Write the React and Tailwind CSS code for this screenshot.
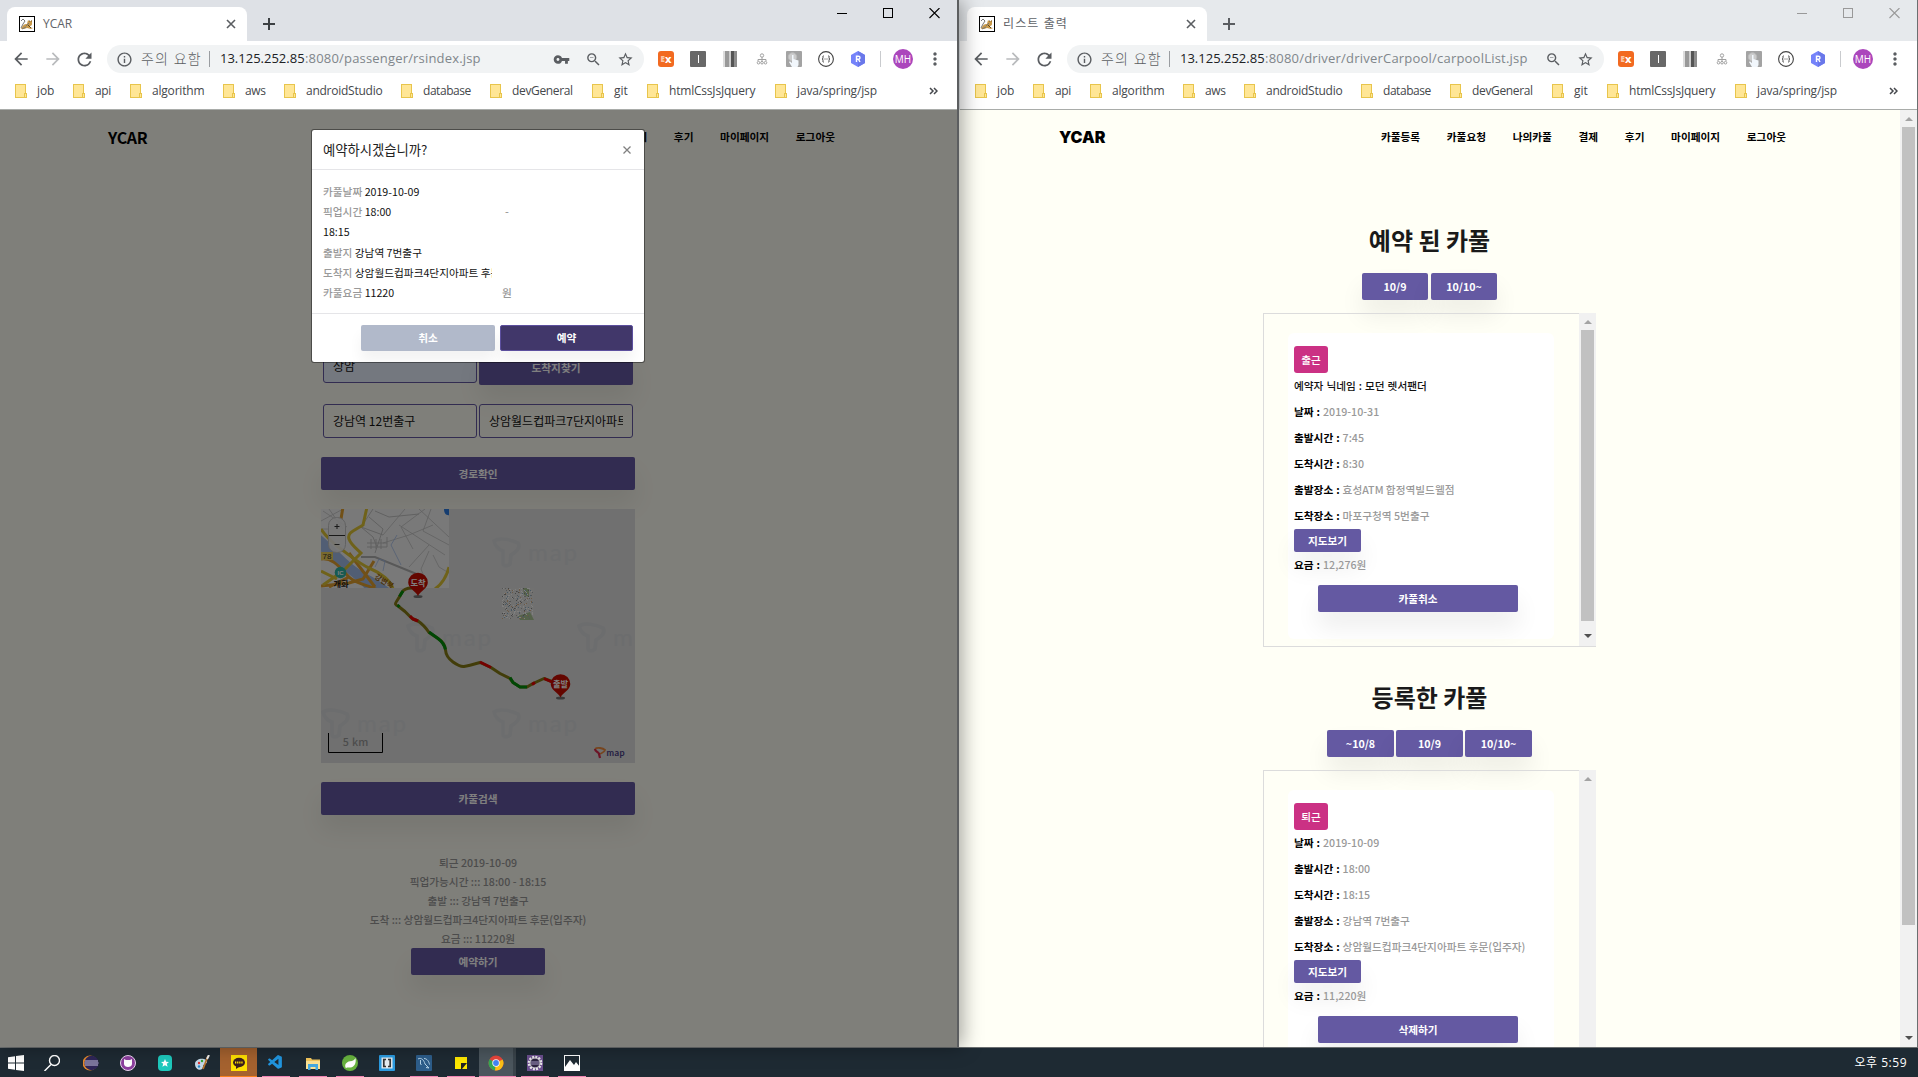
import React from "react";
import { MdArrowBack, MdArrowForward, MdRefresh, MdInfoOutline, MdVpnKey, MdStarBorder, MdZoomOut, MdMoreVert } from "react-icons/md";
import { VscVscode } from "react-icons/vsc";

const UI = "font-['Open_Sans','Noto_Sans_CJK_KR',sans-serif]";
const PAGE = "font-['Noto_Sans_CJK_KR',sans-serif]";

/* ---------- browser chrome ---------- */

const BOOKMARKS = [
  ["job", "w-[58px]", "tracking-[-0.1px]"],
  ["api", "w-[57px]", "tracking-[-0.4px]"],
  ["algorithm", "w-[93px]", "tracking-[-0.2px]"],
  ["aws", "w-[61px]", "tracking-[-0.3px]"],
  ["androidStudio", "w-[117px]", "tracking-[-0.25px]"],
  ["database", "w-[89px]", "tracking-[-0.45px]"],
  ["devGeneral", "w-[102px]", "tracking-[-0.35px]"],
  ["git", "w-[55px]", "tracking-[0px]"],
  ["htmlCssJsJquery", "w-[128px]", "tracking-[-0.2px]"],
  ["java/spring/jsp", "w-[120px]", "tracking-[-0.15px]"],
];

function Favicon() {
  return (
    <svg width="16" height="16" viewBox="0 0 16 16" className="shrink-0">
      <rect x=".5" y=".5" width="15" height="15" fill="#fff" stroke="#000" />
      <path d="M2 13c2-4 3-5 6-5l1-4 1 1h2l1-1v4c0 2-3 2-3 3l4 1-2 1-4-1-3 1z" fill="#c99a4a" />
      <path d="M2 5l2-2 2 2-2 3-2 4M7 10l3-3M3 13l4-2" stroke="#777" fill="none" />
      <path d="M10 5h.8M12 5h.8M9 9l3 3" stroke="#5d4520" />
    </svg>
  );
}

function Folder() {
  return (
    <svg width="12" height="14" viewBox="0 0 12 14" className="shrink-0">
      <rect x=".5" y=".5" width="10" height="13" fill="#ffe696" stroke="#e8c54c" />
      <rect x="9.5" y="9.5" width="2" height="4" fill="#ffe696" stroke="#e8c54c" />
    </svg>
  );
}

function Controls({ color }) {
  return (
    <div className={"flex gap-[35px] " + color}>
      <svg width="11" height="11" viewBox="0 0 11 11"><path d="M0 5.5h10" stroke="currentColor" /></svg>
      <svg width="11" height="11" viewBox="0 0 11 11"><rect x=".5" y=".5" width="9" height="9" fill="none" stroke="currentColor" /></svg>
      <svg width="11" height="11" viewBox="0 0 11 11"><path d="M.5 0l10 10M10.500 0L.5 10" stroke="currentColor" strokeWidth="1.1" /></svg>
    </div>
  );
}

function Extensions() {
  return (
    <div className="flex items-center gap-4">
      <div className="flex h-4 w-4 items-center justify-center rounded-[3px] bg-[#f26a21] text-[9px] font-extrabold leading-none text-white">
        <span className="text-[8px] text-[#fbc9a6]">E</span>X
      </div>
      <div className="flex h-4 w-4 items-center justify-center rounded-[1px] bg-[#686868]">
        <div className="h-2 w-px bg-white" />
      </div>
      <svg width="16" height="16" viewBox="0 0 16 16">
        <path d="M1 0h2v16H1z" fill="#ddd" /><path d="M3 0h4v16H3z" fill="#999" /><path d="M7 0h2v16H7z" fill="#ccc" />
        <path d="M9 0h3v16H9z" fill="#555" /><path d="M12 0h3v16h-3z" fill="#8d8d8d" />
      </svg>
      <svg width="16" height="16" viewBox="0 0 16 16" fill="none" stroke="#a0a0a0">
        <circle cx="8" cy="4.500" r="1.700" /><path d="M8 6v4M4 10V8.500h8V10" />
        <circle cx="4.500" cy="11.700" r="1.300" /><circle cx="8" cy="11.700" r="1.300" /><circle cx="11.500" cy="11.700" r="1.300" />
      </svg>
      <svg width="16" height="16" viewBox="0 0 16 16">
        <rect width="16" height="16" rx="1" fill="#a3a3a3" />
        <circle cx="6.500" cy="6" r="4.200" fill="#ccc" stroke="#bbb" />
        <path d="M6 4h1.500v4l5 1.500V14l-1 2H6l-3-5 1-.7L6 12z" fill="#f2f7fc" />
      </svg>
      <svg width="16" height="16" viewBox="0 0 16 16" fill="none" stroke="#444">
        <circle cx="8" cy="8" r="7.400" strokeWidth="1.100" />
        <path d="M5.800 4.800c-1.300 0-.8 1.200-.8 2s-.3 1.200-1 1.200c.7 0 1 .4 1 1.200s-.5 2 .8 2M10.200 4.800c1.300 0 .8 1.200.8 2s.3 1.200 1 1.200c-.7 0-1 .4-1 1.200s.5 2-.8 2" />
        <path d="M6.500 8h3" strokeDasharray="1 1" />
      </svg>
      <svg width="16" height="16" viewBox="0 0 16 16">
        <path d="M8 0l7 4v8l-7 4-7-4V4z" fill="#7583fa" /><path d="M8 0l7 4v8l-7 4z" fill="#6a78ea" />
        <path d="M6.500 11V5.300h2a1.500 1.500 0 010 3h-2M8.500 8.300L10 11" stroke="#fff" strokeWidth="1.400" fill="none" />
      </svg>
    </div>
  );
}

function Chrome({ title, titleClass, path, pathClass, showKey, strip, controls, plus }) {
  return (
    <div className={"flex h-[110px] flex-col border-b border-[#a9aca9] bg-white " + UI}>
      <div className={"flex h-[41px] items-start justify-between pl-[7px] " + strip}>
        <div className="flex pt-[7px]">
          <div className="flex h-[34px] w-[240px] items-center rounded-t-[8px] bg-white pl-3 pr-[10px]">
            <Favicon />
            <span className={"ml-2 grow whitespace-nowrap text-xs text-[#5f6368] " + titleClass}>{title}</span>
            <svg width="12" height="12" viewBox="0 0 12 12"><path d="M2 2l8 8M10 2l-8 8" stroke="#5a5d61" strokeWidth="1.600" /></svg>
          </div>
          <svg width="12" height="12" viewBox="0 0 12 12" className={"ml-4 mt-[11px] " + plus}>
            <path d="M6 0v12M0 6h12" stroke="currentColor" strokeWidth="2" />
          </svg>
        </div>
        <div className="pr-[17px] pt-[8px]"><Controls color={controls} /></div>
      </div>
      <div className="flex h-[36px] items-center text-[#5a5d61]">
        <MdArrowBack size={20} className="ml-[11px] shrink-0" />
        <MdArrowForward size={20} className="ml-3 shrink-0 text-[#b9bbbd]" />
        <MdRefresh size={21} className="ml-[11px] shrink-0" />
        <div className="ml-[12px] flex h-7 w-[537px] shrink-0 items-center rounded-full bg-[#f1f3f4] text-[13px]">
          <MdInfoOutline size={17} className="ml-[9px] shrink-0" />
          <span className="ml-[8px] w-[68px] shrink-0 whitespace-nowrap text-sm font-light tracking-[1.1px]">주의 요함</span>
          <div className="h-4 w-px shrink-0 bg-[#9a9da1]" />
          <span className="ml-[10px] w-[85px] shrink-0 text-[#202124]">13.125.252.85</span>
          <span className={"whitespace-nowrap text-[#80868b] " + pathClass}>{path}</span>
          <div className="ml-auto flex items-center gap-[15px] pr-[10px]">
            {showKey && <MdVpnKey size={17} />}
            <MdZoomOut size={17} />
            <MdStarBorder size={17} />
          </div>
        </div>
        <div className="ml-[14px]"><Extensions /></div>
        <div className="ml-[14px] h-4 w-px bg-[#c9cbce]" />
        <div className="ml-[12px] flex h-5 w-5 items-center justify-center rounded-full bg-[#ab47bc] text-[10px] text-white">MH</div>
        <MdMoreVert size={20} className="ml-[12px] shrink-0" />
      </div>
      <div className="flex h-[28px] items-center pl-[15px] text-xs text-[#45484c]">
        {BOOKMARKS.map(([name, w, t]) => (
          <div key={name} className={"flex shrink-0 items-center gap-[10px] " + w}>
            <Folder />
            <span className={"whitespace-nowrap " + t}>{name}</span>
          </div>
        ))}
        <svg width="9" height="8" viewBox="0 0 9 8" className="ml-[34px]" fill="none" stroke="#45484c" strokeWidth="1.500">
          <path d="M1 1l3 3-3 3M5 1l3 3-3 3" />
        </svg>
      </div>
    </div>
  );
}

/* ---------- passenger page ---------- */

const BTN = "flex items-center justify-center rounded-[2px] bg-[#6459a2] font-bold text-white shadow-[0_15px_25px_rgba(0,0,0,0.07)]";
const FIELD = "flex h-[34px] w-[154px] items-center overflow-hidden whitespace-nowrap rounded-[3px] border border-[#6459a2] px-[9px] text-xs text-[#111]";

function Watermark({ x, y }) {
  return (
    <g transform={`translate(${x} ${y})`} opacity=".7">
      <path d="M2 5C8 1 20 4 26 7c3 5-2 9-7 12l-1 9c-3 3-7 2-7-1V15c-4-1-8-5-9-10z" fill="none" stroke="#d5d8db" strokeWidth="3.500" />
      <text x="36" y="25" fontSize="24" fill="#d5d8db" fontFamily="Lato" textLength="49">map</text>
    </g>
  );
}

function Pin({ x, y, label }) {
  return (
    <g transform={`translate(${x} ${y})`}>
      <ellipse cx="0" cy="14" rx="4.500" ry="1.500" fill="#777" />
      <path d="M0 13.500C-2 9-9.800 6-9.800 0a9.800 9.800 0 0119.600 0C9.800 6 2 9 0 13.500z" fill="#c80d00" />
      <text y="3" textAnchor="middle" fontSize="8.200" fontWeight="700" fill="#fff" fontFamily="Noto Sans CJK KR">{label}</text>
    </g>
  );
}

const SPECKS = Array.from({ length: 260 }, (_, i) => [
  (i * 37 + ((i * i * 7) % 13)) % 31,
  (i * 53 + ((i * i) % 17)) % 31,
  ["#aaa", "#fff", "#888", "#d9b28a", "#fff", "#8fb0c9", "#fff"][i % 7],
]);

function RouteMap() {
  return (
    <svg width="314" height="254" viewBox="0 0 314 254" className="mt-[19px] block">
      <defs><clipPath id="tile"><rect width="128" height="79" /></clipPath></defs>
      <rect width="314" height="254" fill="#e0e0e0" />
      <Watermark x="171" y="27" /><Watermark x="85" y="112" /><Watermark x="256" y="112" />
      <Watermark x="0" y="198" /><Watermark x="171" y="198" />
      <g clipPath="url(#tile)" fill="none">
        <rect width="128" height="79" fill="#f3f3f3" />
        <path d="M-3 24C8 32 16 42 30 54S52 66 72 82H46C38 72 18 58-3 40z" fill="#a3bde8" />
        <g stroke="#c2c2c2">
          <path d="M52 0L40 18l12 10 4 10M40 18l22 8M54 2l14 6 30-3M48 8l14 12-8 24M46 34h20M46 38h20M50 30v10M55 30v10M60 30v10M66 28v10" />
          <path d="M84 0L62 26M104 0L80 18l12 22M78 16l46 30M110 0l-8 22 26 14M62 34l26-8 24-10M98 0l30 28M108 42l-8 18 4 10M88 58l20-22M112 46l6 12 10 6M2 2l24 16M0 12l22-12M8 0l14 20M0 20h18" strokeWidth=".8" />
          <path d="M40 48h14l44 18" stroke="#b0b0b0" strokeWidth="2" />
        </g>
        <path d="M54 58l4-8 6 2-2 10M76 26l-6 10 10 20" stroke="#a3bde8" strokeWidth=".8" />
        <g stroke="#c98a1e" strokeWidth="3">
          <path d="M22-2l-2 12M0 50c12-2 20 10 28 18s22 8 30 14M53 52L42 70l-14 4-28 3M8 78l20-10M28 44l26 34" stroke="#e2a02f" />
        </g>
        <g stroke="#dfc435" strokeWidth="3">
          <path d="M46-2l-4 18C32 22 26 24 28 30s8 10 12 14L22 62 2 76M0 20c4 6 12 14 20 20s20 16 30 20 20 12 22 20M0 62l16 8M128 58c-2 8-6 16-14 22" />
        </g>
        <path d="M123 0h6v6c-4 1-6-2-6-6z" fill="#2c7be0" />
        <rect x="0" y="43" width="12" height="8" fill="#f1d25a" />
        <text x="1.500" y="49.500" fontSize="8" fill="#333" fontFamily="Liberation Sans">78</text>
        <circle cx="19.500" cy="63.500" r="5.800" fill="#2fb5a5" />
        <text x="19.500" y="66" fontSize="6" fontWeight="700" textAnchor="middle" fill="#fff" fontFamily="Liberation Sans">IC</text>
        <text x="12.500" y="77.500" fontSize="8.200" fontWeight="700" fill="#222" fontFamily="Noto Sans CJK KR">개화</text>
        <text transform="translate(53 69) rotate(32)" fontSize="7.500" fontWeight="700" fill="#9a6410" fontFamily="Noto Sans CJK KR">강변북</text>
      </g>
      <rect x="7.500" y="8.500" width="17" height="35" rx="8" fill="#efefef" fillOpacity=".9" stroke="#c4c4c4" />
      <path d="M8 26.500h16M13.500 17.500h5M16 15v5M13.500 35.500h5" stroke="#333" />
      <g transform="translate(181 79)">
        <rect width="32" height="32" fill="#e2e2e0" />
        <path d="M21 0h6v9l-5-2zM16 28l12-4 4 8H18z" fill="#abc594" />
        {SPECKS.map(([x, y, c], i) => <rect key={i} x={x} y={y} width="1" height="1" fill={c} />)}
      </g>
      <g fill="none" strokeWidth="3" strokeLinejoin="round">
        <path d="M91 79Q83 79 80.500 84T75.500 92.500 77 97L84 102.500 91 109.500 97 112Q103 116 108 123.500L117 129.500Q124 134 124.500 141T132 153 143 157.500 159 153.500L170 158.500 179 164.500 189 169.500 192 173.500 199 178H206L212 174.500 223 169.500 231 172.500" stroke="#857a14" />
        <path d="M82 82l-3.500 5.500M76.500 96l2 2M108 123l9 6.500q6 4.500 7.500 11M189 168.500l3 5 7 4.500h7" stroke="#008f0a" />
        <path d="M89 107l3 3 5 2M159 153l11 5.500M211 175.500l3-2M223 169.500l8 3.500" stroke="#e80000" />
      </g>
      <Pin x={97} y={73.5} label="도착" />
      <Pin x={239.500} y={175} label="출발" />
      <path d="M7.500 224v19.500h54V224" fill="none" stroke="#000" />
      <text x="34.500" y="237" textAnchor="middle" fontSize="10.700" wordSpacing="1" fill="#999" fontWeight="500" fontFamily="Noto Sans CJK KR">5 km</text>
      <path d="M274 240c2-2 8-1 10 1-1 3-4 3-5 4" fill="none" stroke="#ee8a3c" strokeWidth="1.800" />
      <path d="M274 240c0 3 4 3 4 5l1 4" fill="none" stroke="#d8284c" strokeWidth="2.200" />
      <text x="285.500" y="247" fontSize="9" fontWeight="700" fill="#4b3f86" fontFamily="Lato" textLength="18">map</text>
    </svg>
  );
}

function PassengerPage() {
  return (
    <div className={"relative h-[937px] overflow-hidden bg-[#fffef4] text-[10.667px] " + PAGE}>
      <div className="flex h-[54px] items-center justify-between pl-[108px] pr-[122px] font-bold text-black">
        <span className="text-base tracking-[-0.3px]">YCAR</span>
        <div className="flex gap-[26.67px]"><span>결제</span><span>후기</span><span>마이페이지</span><span>로그아웃</span></div>
      </div>
      <div className="ml-[321px] mt-[185px] w-[314px]">
        <div className="flex gap-[2px] px-[2px]">
          <div className={FIELD + " bg-[#e8f0fe]"}>상암</div>
          <div className={BTN + " h-9 w-[154px] pt-[2px]"}>도착지찾기</div>
        </div>
        <div className="mt-[19px] flex gap-[2px] px-[2px]">
          <div className={FIELD}>강남역 12번출구</div>
          <div className={FIELD}><span className="overflow-hidden">상암월드컵파크7단지아파트</span></div>
        </div>
        <div className={BTN + " mt-[19px] h-[33px]"}>경로확인</div>
        <RouteMap />
        <div className={BTN + " mt-[19px] h-[33px]"}>카풀검색</div>
        <div className="mt-[38px] flex flex-col items-center whitespace-nowrap font-medium leading-[19px] text-[#999]">
          <div>퇴근 2019-10-09</div>
          <div>픽업가능시간 ::: 18:00 - 18:15</div>
          <div>출발 ::: 강남역 7번출구</div>
          <div>도착 ::: 상암월드컵파크4단지아파트 후문(입주자)</div>
          <div>요금 ::: 11220원</div>
          <div className={BTN + " h-[27px] w-[134px]"}>예약하기</div>
        </div>
      </div>
      <div className="absolute inset-0 bg-black/50" />
      <Modal />
    </div>
  );
}

function Modal() {
  const dark = "font-normal text-[#111]";
  return (
    <div className="absolute left-[311px] top-[19px] flex h-[234px] w-[334px] flex-col rounded-[3px] border border-black/40 bg-white bg-clip-padding font-medium text-[#999]">
      <div className="flex h-10 shrink-0 items-center justify-between border-b border-[#e5e5e8] pl-[11px] pr-[13px]">
        <span className="text-[13.333px] font-normal text-[#222]">예약하시겠습니까?</span>
        <svg width="8" height="8" viewBox="0 0 8 8"><path d="M.5.5l7 7M7.500.5l-7 7" stroke="#808080" strokeWidth="1.300" /></svg>
      </div>
      <div className="grid h-[144px] shrink-0 grid-rows-[20px_20px_20px_21px_20px_20px] content-start border-b border-[#e5e5e8] pl-[11px] pt-[12px] leading-[20px]">
        <div>카풀날짜 <span className={dark}>2019-10-09</span></div>
        <div className="flex"><span className="w-[182px]">픽업시간 <span className={dark}>18:00</span></span>-</div>
        <div className={dark}>18:15</div>
        <div className="leading-[21px]">출발지 <span className={dark}>강남역 7번출구</span></div>
        <div className="w-[169px] overflow-hidden whitespace-nowrap">도착지 <span className={dark}>상암월드컵파크4단지아파트 후문</span></div>
        <div className="flex"><span className="w-[179px]">카풀요금 <span className={dark}>11220</span></span>원</div>
      </div>
      <div className="flex grow items-start justify-end gap-[5px] overflow-hidden pr-[11px] pt-[11px] font-bold text-white">
        <div className="flex h-[26px] w-[134px] items-center justify-center rounded-[2px] bg-[#b1b9ca] shadow-[0_10px_14px_rgba(0,0,0,0.05)]">취소</div>
        <div className="flex h-[26px] w-[133px] items-center justify-center rounded-[2px] border border-[#5c4f9e] bg-[#41376a] shadow-[0_10px_14px_rgba(0,0,0,0.05)]">예약</div>
      </div>
    </div>
  );
}

/* ---------- driver page ---------- */

function Arrow({ down, color }) {
  return (
    <svg width="8" height="4" viewBox="0 0 8 4" fill={color}>
      <path d={down ? "M0 0h8L4 4z" : "M0 4h8L4 0z"} />
    </svg>
  );
}

function CarpoolCard({ kind, nickname, rows, fee, action }) {
  return (
    <div className="ml-[24px] mt-[19px] h-[306px] w-[266px] shrink-0 rounded-[6px] bg-white pl-[6px] pt-[13px] font-medium text-[#999]">
      <div className="mb-px flex h-[27px] w-[34px] items-center justify-center rounded-[3px] bg-[#cb3184] text-white">{kind}</div>
      {nickname && <div className="h-[26px] leading-[24px] text-[#111] [word-spacing:0.6px]">예약자 닉네임 : {nickname}</div>}
      {rows.map(([k, v]) => (
        <div key={k} className="h-[26px] whitespace-nowrap leading-[24px]"><b className="text-black [word-spacing:0.5px]">{k} :</b><span className="ml-[3px]">{v}</span></div>
      ))}
      <div className={BTN + " -mt-px h-[23px] w-[67px]"}>지도보기</div>
      <div className="h-[26px] leading-[26px]"><b className="text-black [word-spacing:0.5px]">요금 :</b><span className="ml-[3px]">{fee}</span></div>
      <div className={BTN + " ml-[24px] mt-[7px] h-[27px] w-[200px]"}>{action}</div>
    </div>
  );
}

function ListBox({ scrollable, children }) {
  return (
    <div className="mt-[13px] flex h-[334px] w-[333px] shrink-0 justify-between border border-r-0 border-[#dcdcdc]">
      <div className="flex grow flex-col overflow-hidden">{children}</div>
      <div className="-mt-px flex w-[17px] flex-col items-center justify-between bg-[#f1f1f1] pb-[8px] pt-[7px]">
        <Arrow color="#a3a3a3" />
        {scrollable && <div className="mb-auto mt-[6px] h-[291px] w-[13px] bg-[#c1c1c1]" />}
        <Arrow down color="#505050" />
      </div>
    </div>
  );
}

function DriverPage() {
  return (
    <div className={"flex h-[937px] bg-[#fffff6] text-[10.667px] " + PAGE}>
      <div className="flex w-[941px] flex-col items-center overflow-hidden">
        <div className="flex h-[54px] w-full shrink-0 items-center justify-between pl-[100px] pr-[114px] font-bold text-black">
          <span className="font-['Inter',sans-serif] text-base font-black">YCAR</span>
          <div className="flex gap-[26.67px]">
            {["카풀등록", "카풀요청", "나의카풀", "결제", "후기", "마이페이지", "로그아웃"].map((t) => <span key={t}>{t}</span>)}
          </div>
        </div>
        <h2 className="mt-[58px] h-[51px] shrink-0 text-[24px] font-bold leading-[36px] text-[#1a1a1a]">예약 된 카풀</h2>
        <div className="flex shrink-0 gap-[3px]">
          <div className={BTN + " h-[27px] w-[66px]"}>10/9</div>
          <div className={BTN + " h-[27px] w-[66px]"}>10/10~</div>
        </div>
        <ListBox scrollable>
          <CarpoolCard
            kind="출근" nickname="모던 렛서팬더" fee="12,276원" action="카풀취소"
            rows={[["날짜", "2019-10-31"], ["출발시간", "7:45"], ["도착시간", "8:30"], ["출발장소", "효성ATM 합정역빌드웰점"], ["도착장소", "마포구청역 5번출구"]]}
          />
        </ListBox>
        <h2 className="mt-[32px] h-[51px] shrink-0 text-[24px] font-bold leading-[36px] text-[#1a1a1a]">등록한 카풀</h2>
        <div className="flex shrink-0 gap-[2px]">
          <div className={BTN + " h-[27px] w-[67px]"}>~10/8</div>
          <div className={BTN + " h-[27px] w-[67px]"}>10/9</div>
          <div className={BTN + " h-[27px] w-[67px]"}>10/10~</div>
        </div>
        <ListBox>
          <CarpoolCard
            kind="퇴근" fee="11,220원" action="삭제하기"
            rows={[["날짜", "2019-10-09"], ["출발시간", "18:00"], ["도착시간", "18:15"], ["출발장소", "강남역 7번출구"], ["도착장소", "상암월드컵파크4단지아파트 후문(입주자)"]]}
          />
        </ListBox>
      </div>
      <div className="flex w-[17px] flex-col items-center bg-[#f1f1f1] py-[7px]">
        <Arrow color="#a3a3a3" />
        <div className="mb-auto mt-[6px] h-[798px] w-[13px] bg-[#c1c1c1]" />
        <Arrow down color="#505050" />
      </div>
    </div>
  );
}

/* ---------- taskbar ---------- */

const ICONS = [
  <g fill="#fff"><path d="M0 2.200l7-1v6.300H0zM8 1l8-1v7.500H8zM0 8.500h7v6.300l-7-1zM8 8.500h8V16l-8-1z" /></g>,
  <g fill="none" stroke="#fff" strokeWidth="1.400"><circle cx="10.500" cy="5.500" r="5" /><path d="M7 9.500L.5 16" /></g>,
  <g><circle cx="7" cy="8" r="7.500" fill="#e58a2e" /><circle cx="8.500" cy="8" r="7.200" fill="#2f2658" /><path d="M2 6h13M1.500 8h14M2 10h13" stroke="#c8c3e0" strokeWidth="1.200" /></g>,
  <g><circle cx="8" cy="8" r="7.500" fill="#8c3f9e" stroke="#e9d5ee" /><path d="M4 4l2 1h4l2-1v5c0 4-8 4-8 0z" fill="#fff" /></g>,
  <g><rect x="1" y="0" width="14" height="16" rx="4" fill="#1ec9bd" /><path d="M8 4l1.200 2.700 2.800.2-2.200 1.900.8 2.900L8 10.200l-2.600 1.500.8-2.900L4 6.900l2.800-.2z" fill="#fff" /></g>,
  <g><path d="M1 9c0-4 5-6 9-5s4 4 1 5-1 3-3 5-7 0-7-5z" fill="#c5d9e8" /><circle cx="5" cy="8" r="1.200" fill="#d33" /><circle cx="8" cy="6" r="1.200" fill="#3a3" /><circle cx="5" cy="11.500" r="1.200" fill="#28c" /><path d="M14 1L9 14" stroke="#b8732c" strokeWidth="1.800" /><path d="M15 0l-2 4" stroke="#eee" strokeWidth="2" /></g>,
  <g><rect width="16" height="16" fill="#ffe100" /><ellipse cx="8" cy="7.500" rx="6" ry="4.700" fill="#3b1e1e" /><path d="M5 11l0 3 3-2z" fill="#3b1e1e" /><path d="M4 7.500h8" stroke="#ffe100" strokeWidth="2" strokeDasharray="1.300 .8" /></g>,
  null,
  <g><path d="M1 3h5l1 1.500h8V14H1z" fill="#f5c85c" /><path d="M1 6h14v8H1z" fill="#fde394" /><path d="M3 9h10v6h-2.500v-3h-5v3H3z" fill="#46a9e0" /></g>,
  <g><circle cx="8" cy="8" r="8" fill="#68b33f" /><path d="M13.500 3c1 5-1 9-5 9.500-2 .2-3.500-.3-4.500.8-2-3 0-6.500 4-7C11 6 12.500 5 13.500 3z" fill="#fff" /></g>,
  <g><rect width="16" height="16" rx="1" fill="#2b9be0" /><rect x="2.500" y="2.500" width="11" height="11" fill="#e8eef2" /><path d="M7 4.500H4.800v7H7M9 4.500h2.200v7H9" fill="none" stroke="#333" strokeWidth="1.700" /></g>,
  <g><rect width="16" height="16" rx="1" fill="#2d5d8a" /><path d="M2 4c3-2 6 1 7 5l4 4-3-.5M4.500 5v4l1 1M8 3.500c3 0 5 3 5.500 6" stroke="#b5d3e8" fill="none" /></g>,
  <g><path d="M2 2h12v12H2z" fill="#ffe900" /><path d="M8 8h6l-5 6H8z" fill="#222" /></g>,
  <g><circle cx="8" cy="8" r="7.500" fill="#e8453c" /><path d="M8 8L1.500 4.200A7.500 7.500 0 007 15.400z" fill="#35a853" /><path d="M8 8l6.600-3.500A7.500 7.500 0 017 15.400z" fill="#fbc116" /><circle cx="8" cy="8" r="3.700" fill="#fff" /><circle cx="8" cy="8" r="2.900" fill="#4285f4" /></g>,
  <g><rect width="16" height="16" fill="#6b4f8e" /><circle cx="8" cy="8" r="6.200" fill="none" stroke="#e8e8e8" strokeWidth="2.200" strokeDasharray="2 1.200" /><circle cx="8" cy="8" r="5" fill="#2d2440" stroke="#ddd" /><path d="M4 7h8M4 9h8" stroke="#a79ac4" /></g>,
  <g><rect x=".5" y=".5" width="15" height="15" fill="#1f2a33" stroke="#fff" /><path d="M1 12l5-7 4 5 2-3 4 5v4H1z" fill="#fff" /></g>,
];

function Taskbar() {
  return (
    <div className={"flex h-[29px] items-center justify-between bg-[#1e2a33] pr-[11px] " + UI}>
      <div className="flex h-full items-end">
        {ICONS.map((icon, i) => (
          <div
            key={i}
            className={
              "relative flex h-full shrink-0 items-center justify-center " +
              (i === 0 ? "w-[32px] " : i === 1 ? "w-[40px] " : "w-[37px] ") +
              (i === 6 ? "bg-[#a5622f] " : i === 13 ? "border-r-[3px] border-[#3a444b] bg-[#4b565d] " : "")
            }
          >
            {icon ? <svg width="16" height="16" viewBox="0 0 16 16">{icon}</svg> : <VscVscode size={17} color="#2196e0" />}
            {i > 6 && i !== 10 && <div className={"absolute bottom-0 h-px bg-[#f084b4] " + (i === 13 ? "-right-[3px] left-0" : "w-7")} />}
            {i === 6 && <div className="absolute inset-x-0 bottom-0 h-px bg-[#f9801d]" />}
          </div>
        ))}
      </div>
      <span className="text-xs tracking-[0.5px] text-white">오후 5:59</span>
    </div>
  );
}

export default function App() {
  return (
    <div className="flex h-[1077px] w-[1918px] flex-col overflow-hidden bg-[#1e2a33]">
      <div className="flex h-[1048px] border-b border-[#6b6f70]">
        <div className="relative z-10 w-[959px] shrink-0 border-r-2 border-[#5c5e60] shadow-[4px_0_18px_rgba(0,0,0,0.35)]">
          <Chrome
            title="YCAR" titleClass="tracking-[0px]" path=":8080/passenger/rsindex.jsp" pathClass="tracking-[0.18px]"
            showKey strip="bg-[#dee1e6]" controls="text-black" plus="text-[#3c4043]"
          />
          <PassengerPage />
        </div>
        <div className="w-[959px] shrink-0 border-r border-[#6b6f70]">
          <div className="bg-[#e6e9ec] pl-px">
            <Chrome
              title="리스트 출력" titleClass="tracking-[1.1px]" path=":8080/driver/driverCarpool/carpoolList.jsp" pathClass="tracking-[0.21px]"
              strip="bg-[#e6e9ec]" controls="text-[#999]" plus="text-[#5a5d61]"
            />
          </div>
          <DriverPage />
        </div>
      </div>
      <Taskbar />
    </div>
  );
}
